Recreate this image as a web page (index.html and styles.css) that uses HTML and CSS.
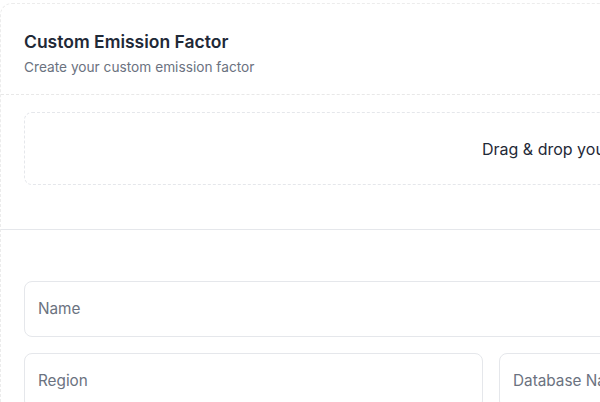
FILE: index.html
```html
<!DOCTYPE html>
<html>
<head>
<meta charset="utf-8">
<link rel="stylesheet" href="styles.css">
</head>
<body>
<div class="page">
  <div class="card">
    <div class="card-header">
      <h1 class="title">Custom Emission Factor</h1>
      <p class="subtitle">Create your custom emission factor</p>
    </div>
    <div class="upload-section">
      <div class="dropzone">
        <span class="drop-text">Drag &amp; drop your file here, or click to select a file</span>
      </div>
    </div>
    <div class="form">
      <div class="field full"><span class="placeholder">Name</span></div>
      <div class="row">
        <div class="field"><span class="placeholder">Region</span></div>
        <div class="field"><span class="placeholder">Database Name</span></div>
      </div>
    </div>
  </div>
</div>
</body>
</html>
```
FILE: styles.css
```css
html, body {
  margin: 0;
  padding: 0;
  background: #ffffff;
  overflow: hidden;
}
body {
  font-family: Inter, "Liberation Sans", sans-serif;
  color: #1f2937;
}
.page {
  padding-top: 3px;
  width: 1100px;
}
.card {
  width: 982px;
  border: 1px dashed #ececec;
  border-radius: 12px;
  box-sizing: border-box;
  background: #fff;
}
.card-header {
  padding: 27px 23px 17px 23px;
  border-bottom: 1px dashed #e8e8e8;
}
.title {
  margin: 0;
  font-size: 17.5px;
  line-height: 22px;
  font-weight: 600;
  color: #1f2937;
}
.subtitle {
  margin: 4px 0 0 0;
  font-size: 13.7px;
  line-height: 20px;
  color: #6b7280;
}
.upload-section {
  padding: 17px 23px 44px 23px;
  border-bottom: 1px solid #e5e7eb;
}
.dropzone {
  height: 73px;
  box-sizing: border-box;
  border: 1px dashed #e5e7eb;
  border-radius: 8px;
  display: flex;
  align-items: center;
  padding-left: 457px;
}
.drop-text {
  font-size: 16px;
  color: #1f2937;
  white-space: nowrap;
}
.form {
  padding: 51px 23px 24px 23px;
  display: flex;
  flex-direction: column;
  gap: 16px;
}
.row {
  display: flex;
  gap: 16px;
}
.row .field {
  flex: 1;
}
.field {
  height: 56px;
  box-sizing: border-box;
  border: 1px solid #e5e7eb;
  border-radius: 8px;
  display: flex;
  align-items: center;
  padding-left: 13px;
  padding-bottom: 2px;
}
.placeholder {
  font-size: 15.3px;
  color: #6b7280;
}
```
